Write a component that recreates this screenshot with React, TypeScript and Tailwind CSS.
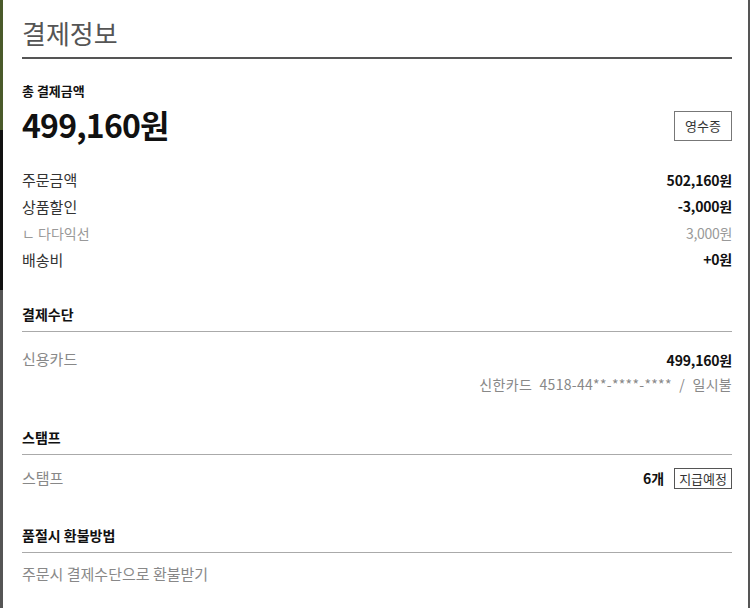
import React from "react";

const font = { fontFamily: '"Noto Sans CJK KR", "Noto Sans", sans-serif' };

function Row({ label, value, muted }: { label: string; value: string; muted?: boolean }) {
  return (
    <div className="flex items-center justify-between h-[26.5px]">
      <span className={muted ? "text-[14px] text-[#999]" : "text-[15px] text-[#333]"}>{label}</span>
      <span
        className={
          muted
            ? "text-[14px] text-[#999] tracking-[-0.3px]"
            : "text-[14px] font-bold text-[#111] tracking-[-0.2px]"
        }
      >
        {value}
      </span>
    </div>
  );
}

function SectionHead({ title }: { title: string }) {
  return (
    <div className="border-b border-[#aaa] pb-[7px]">
      <div className="text-[14px] font-bold text-[#111] leading-[20px]">{title}</div>
    </div>
  );
}

export default function App() {
  return (
    <div className="w-[750px] h-[608px] flex bg-[#3a3a3a]" style={font}>
      <div className="w-[3px] flex flex-col">
        <div className="h-[130px] bg-[#4a5a2a]" />
        <div className="h-[160px] bg-[#111]" />
        <div className="flex-1 bg-[#555]" />
      </div>
      <div className="flex-1 bg-white pl-[19px] pr-[16px]">
        <div className="border-b-2 border-[#555] pt-[15px] pb-[6px]">
          <div className="text-[26px] text-[#555] leading-[36px]">결제정보</div>
        </div>
        <div className="pt-[22px] text-[13px] font-bold text-[#111] leading-[20px]">총 결제금액</div>
        <div className="flex items-center justify-between mt-[4px]">
          <div className="text-[32px] font-bold text-[#111] leading-[38px] tracking-[-0.8px]">499,160원</div>
          <div className="border border-[#777] w-[58px] h-[30px] flex items-center justify-center text-[13px] text-[#333] mt-[4px]">
            영수증
          </div>
        </div>
        <div className="mt-[24px]">
          <Row label="주문금액" value="502,160원" />
          <Row label="상품할인" value="-3,000원" />
          <Row label="ㄴ 다다익선" value="3,000원" muted />
          <Row label="배송비" value="+0원" />
        </div>
        <div className="mt-[31px]">
          <SectionHead title="결제수단" />
          <div className="flex justify-between pt-[16px]">
            <span className="text-[15px] text-[#888]">신용카드</span>
            <div className="flex flex-col items-end">
              <span className="text-[14px] font-bold text-[#111] tracking-[-0.2px] leading-[24px]">499,160원</span>
              <span className="text-[14px] text-[#888] leading-[24px] tracking-[0.3px] [word-spacing:4px]">
                신한카드 4518-44**-****-**** / 일시불
              </span>
            </div>
          </div>
        </div>
        <div className="mt-[31px]">
          <SectionHead title="스탬프" />
          <div className="flex justify-between items-center pt-[12px]">
            <span className="text-[15px] text-[#888]">스탬프</span>
            <div className="flex items-center gap-[10px]">
              <span className="text-[14px] font-bold text-[#111]">6개</span>
              <span className="border border-[#555] text-[13px] text-[#333] px-[4px] h-[21px] leading-[19px]">지급예정</span>
            </div>
          </div>
        </div>
        <div className="mt-[35px]">
          <SectionHead title="품절시 환불방법" />
          <div className="pt-[10px] text-[15px] text-[#888]">주문시 결제수단으로 환불받기</div>
        </div>
      </div>
      <div className="w-[2px] bg-[#555]" />
    </div>
  );
}
